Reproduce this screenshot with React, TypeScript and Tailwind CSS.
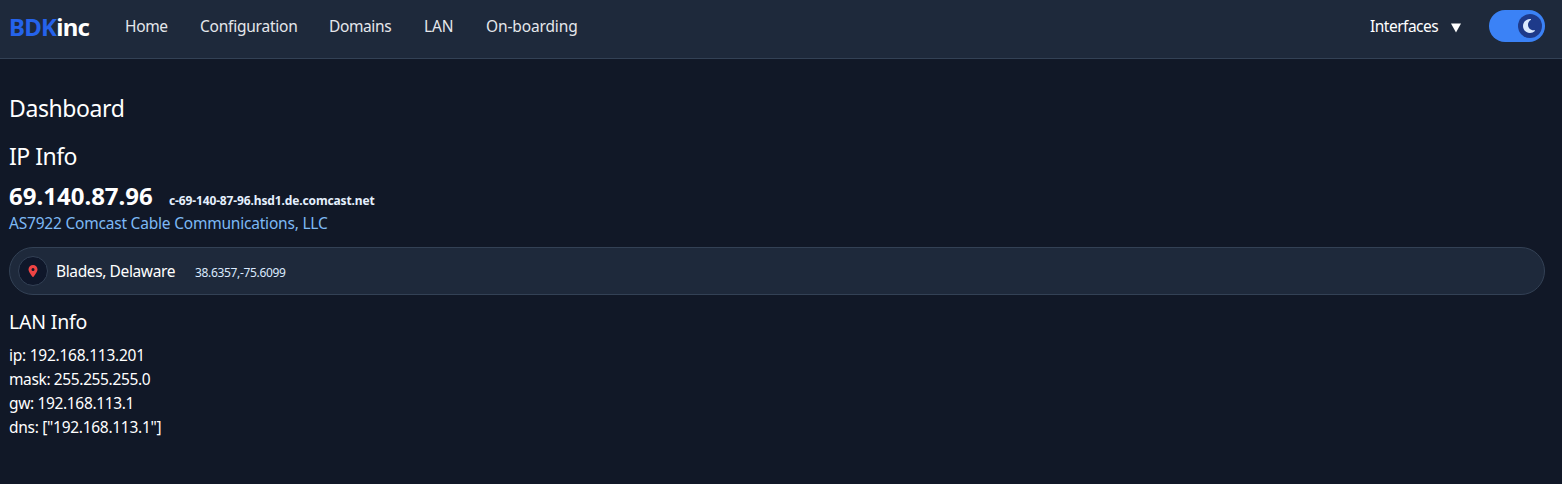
import { FaLocationDot, FaMoon } from "react-icons/fa6";

const links = [
  { label: "Home", cls: "w-[43px] tracking-[-0.33px]" },
  { label: "Configuration", cls: "w-[97px] tracking-[-0.23px]" },
  { label: "Domains", cls: "w-[63px] tracking-[-0.38px]" },
  { label: "LAN", cls: "w-[30px] tracking-[-0.2px]" },
  { label: "On-boarding", cls: "w-[92px] tracking-[-0.13px]" },
];

const lan = [
  { text: "ip: 192.168.113.201", cls: "tracking-[-0.25px]" },
  { text: "mask: 255.255.255.0", cls: "tracking-[-0.37px]" },
  { text: "gw: 192.168.113.1", cls: "tracking-[-0.35px]" },
  { text: 'dns: ["192.168.113.1"]', cls: "tracking-[-0.29px]" },
];

function Header() {
  return (
    <header className="flex h-[59px] items-start border-b border-[#334155] bg-[#1e293b] pl-[9px] pr-[17px]">
      <a className="mt-[11px] w-[80px] text-[24px] leading-8 font-bold tracking-[-0.75px]">
        <span className="text-[#2563eb]">BDK</span>inc
      </a>
      <nav className="mt-[14px] ml-9 flex gap-8 text-[15.5px] leading-6 text-[#e5e7eb]">
        {links.map((l) => (
          <a key={l.label} className={l.cls}>
            {l.label}
          </a>
        ))}
      </nav>
      <button className="mt-[14px] ml-auto flex w-[91px] items-center justify-between text-[15.5px] leading-6 tracking-[-0.5px]">
        Interfaces
        <svg width="10" height="10" viewBox="0 0 10 10" className="mt-[3px] fill-white">
          <path d="M0 0.5H10L5 9.5Z" />
        </svg>
      </button>
      <button
        role="switch"
        aria-checked="true"
        className="mt-[10px] ml-[28px] flex h-8 w-14 items-center justify-end rounded-full bg-[#3b82f6] pr-[3px]"
      >
        <span className="flex size-6 items-center justify-center rounded-full bg-[#1e3a8a] pr-[2px] text-[#dbeafe]">
          <FaMoon className="size-4" />
        </span>
      </button>
    </header>
  );
}

export default function App() {
  return (
    <div className="min-h-[484px] bg-[#111827] font-['Noto_Sans','Open_Sans',sans-serif] whitespace-nowrap text-white">
      <Header />
      <main className="pt-[33px] pr-[17px] pl-[9px]">
        <h1 className="text-[23px] leading-8 tracking-[-0.4px]">Dashboard</h1>
        <h2 className="mt-4 text-[23px] leading-8 tracking-[-0.5px]">IP Info</h2>
        <div className="mt-2 flex h-8 items-baseline leading-8">
          <span className="w-[144px] text-[24px] font-bold">69.140.87.96</span>
          <span className="ml-4 text-[12px] font-bold tracking-[-0.13px] text-[#e5f0fe]">
            c-69-140-87-96.hsd1.de.comcast.net
          </span>
        </div>
        <p className="-mt-px text-[15.5px] leading-6 tracking-[-0.21px] text-[#7db8f5]">
          AS7922 Comcast Cable Communications, LLC
        </p>
        <div className="mt-3 flex h-12 items-center rounded-full border border-[#334155] bg-[#1e293b] pl-2">
          <span className="flex size-[30px] items-center justify-center rounded-full border border-[#334155] bg-[#0f172a] text-[#ef4444]">
            <FaLocationDot className="size-3" />
          </span>
          <span className="ml-2 w-[119px] text-[15.5px] leading-6 tracking-[-0.38px]">Blades, Delaware</span>
          <span className="mt-[3px] ml-5 text-[12px] tracking-[-0.33px] text-[#dbeafe]">38.6357,-75.6099</span>
        </div>
        <h3 className="mt-[13px] text-[19.5px] leading-7 tracking-[-0.2px]">LAN Info</h3>
        <ul className="mt-[7px] text-[15.5px] leading-6">
          {lan.map((l) => (
            <li key={l.text}>
              <span className={l.cls}>{l.text}</span>
            </li>
          ))}
        </ul>
      </main>
    </div>
  );
}
